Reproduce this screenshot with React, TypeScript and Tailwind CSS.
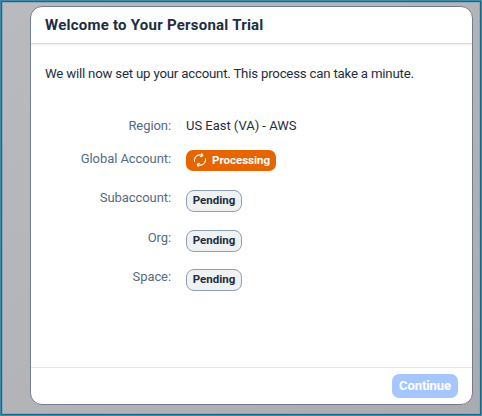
import type { ReactNode } from "react";

function Row({ label, className, children }: { label: string; className: string; children: ReactNode }) {
  return (
    <div className={`flex items-start ${className}`}>
      <div className="mr-[15px] w-[140px] text-right text-[13px] leading-[18px] tracking-[-0.08px] whitespace-nowrap text-[#556b82]">{label}</div>
      {children}
    </div>
  );
}

function Pending() {
  return (
    <span className="mt-[1px] flex h-[22px] w-[56px] items-center justify-center rounded-[8px] border border-[#8c9fb4] bg-[#eff1f2] text-[11.5px] font-bold text-[#1d2d3e]">
      Pending
    </span>
  );
}

export default function App() {
  return (
    <div className="h-[416px] w-[482px] overflow-hidden border border-[#4388a6] bg-[#1b6587] p-px font-['Roboto',sans-serif]">
      <div className="h-full border border-[#8ba9b8] bg-linear-to-br from-[#b9babd] via-[#b3b4b8] to-[#aaabb0] pt-[3px] pl-[27px]">
        <main className="flex h-[399px] w-[443px] flex-col overflow-hidden rounded-[12px] border border-[#747d8b] bg-white text-[#1d2d3e]">
          <header className="flex h-[37px] shrink-0 items-center border-b border-[#d5d8d9] pl-[14px] shadow-[0_1px_2px_#0001]">
            <h1 className="text-[15px] font-bold tracking-[0.24px] whitespace-nowrap">Welcome to Your Personal Trial</h1>
          </header>
          <section className="flex-1 pt-[21px]">
            <p className="pl-[14px] text-[13.25px] leading-[18px] tracking-[-0.21px] whitespace-nowrap">We will now set up your account. This process can take a minute.</p>
            <Row label="Region:" className="mt-[34px] h-[33px]">
              <span className="text-[13px] leading-[18px] tracking-[-0.02px]">US East (VA) - AWS</span>
            </Row>
            <Row label="Global Account:" className="h-[39px]">
              <span className="flex h-[21px] w-[90px] items-center rounded-[7px] bg-[#e76500] pl-[7px] text-[11.5px] font-bold text-white">
                <svg className="mr-[5px] h-[14px] w-[14px] shrink-0 -translate-y-px" viewBox="0 0 14 14" fill="none" stroke="white" strokeWidth="1.1" strokeLinecap="round" strokeLinejoin="round">
                  <path transform="rotate(22 7 7)" d="M2.5 10.2A5.2 5.2 0 0 1 6.2 2H8M6.2.4 8 2 6.2 3.7M11.5 3.8A5.2 5.2 0 0 1 7.8 12H6M7.8 10.3 6 12l1.8 1.6" />
                </svg>
                Processing
              </span>
            </Row>
            <Row label="Subaccount:" className="h-[40px]"><Pending /></Row>
            <Row label="Org:" className="h-[39px]"><Pending /></Row>
            <Row label="Space:" className="h-[40px]"><Pending /></Row>
          </section>
          <footer className="flex h-[37px] shrink-0 items-start justify-end border-t border-[#e5e7e8] pt-[6px] pr-[14px]">
            <button className="h-[24px] w-[66px] rounded-[7px] bg-[#a6c6ff] text-[13px] font-bold tracking-[-0.1px] text-white">Continue</button>
          </footer>
        </main>
      </div>
    </div>
  );
}
